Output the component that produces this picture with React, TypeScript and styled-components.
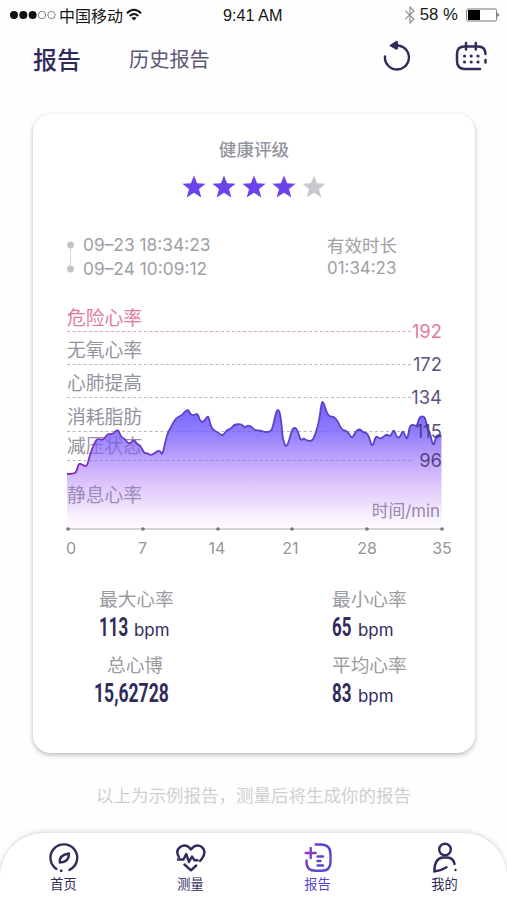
import React from "react";
import styled, { createGlobalStyle } from "styled-components";

const NAVY = "#312b5c";
const GREY = "#94949f";
const CJK = '"Noto Sans CJK SC", sans-serif';
const LATIN = 'Inter, "Noto Sans CJK SC", sans-serif';

const GlobalStyle = createGlobalStyle`
  * { box-sizing: border-box; }
  body { margin: 0; background: #fff; font-family: ${CJK}; overflow: hidden; }
  svg { display: block; flex: none; }
`;

const Screen = styled.main`
  width: 507px;
  height: 900px;
  display: flex;
  flex-direction: column;
  background: #fefefe;
  overflow: hidden;
`;

const StatusBar = styled.div`
  height: 30px;
  padding: 0 7px 0 10px;
  display: grid;
  grid-template-columns: 213px 1fr auto;
  align-items: center;
  color: #161616;
  font: 16.2px/30px "Liberation Sans", "Noto Sans CJK SC", sans-serif;
`;

const StatusGroup = styled.div<{ $gap: number }>`
  display: flex;
  align-items: center;
  gap: ${(p) => p.$gap}px;
  white-space: nowrap;
`;

const Carrier = styled.span`
  font: 16px/30px ${CJK};
`;

const Percent = styled.span`
  font-size: 16.8px;
  margin-right: 4px;
`;

const Header = styled.header`
  height: 84px;
  padding: 9px 18px 0 33px;
  display: flex;
  align-items: flex-start;
`;

const Tab = styled.span<{ $active?: boolean }>`
  width: ${(p) => (p.$active ? 96 : 253)}px;
  line-height: 40px;
  font-size: ${(p) => (p.$active ? 24 : 20.2)}px;
  font-weight: ${(p) => (p.$active ? 500 : 400)};
  color: ${(p) => (p.$active ? NAVY : "#5c5875")};
`;

const HeaderIcons = styled.div`
  display: flex;
  gap: 43px;
`;

const Card = styled.section`
  width: 442px;
  height: 639px;
  margin-left: 33px;
  flex: none;
  display: flex;
  flex-direction: column;
  border-radius: 18px;
  background: #fff;
  box-shadow: 0 2px 5px rgba(0, 0, 0, 0.27);
`;

const RatingTitle = styled.h2`
  margin: 20px 0 0;
  height: 30px;
  text-align: center;
  font-size: 17.6px;
  line-height: 30px;
  font-weight: 500;
  color: ${GREY};
`;

const Stars = styled.div`
  display: flex;
  justify-content: center;
  gap: 6px;
  height: 25px;
  margin-top: 11px;
`;

const Session = styled.div`
  display: flex;
  height: 48px;
  margin-top: 33px;
  padding-left: 33px;
  color: #a0a0a5;
  font: 17.35px/24px ${LATIN};
`;

const Times = styled.div`
  width: 244px;
  margin-left: 8px;
  display: flex;
  flex-direction: column;
`;

const Duration = styled.div`
  display: flex;
  flex-direction: column;
  font-size: 16.9px;
  line-height: 23px;
  padding-top: 1px;
`;

const DurationLabel = styled.span`
  font-size: 17.5px;
`;

const ChartArea = styled.div`
  margin: 19px 0 0 27px;
  width: 400px;
  height: 265px;
`;

const Stats = styled.div`
  display: grid;
  grid-template-columns: 233px 1fr;
  grid-auto-rows: 66px;
  padding-left: 61px;
  margin-top: 19px;
`;

const Stat = styled.div<{ $inset?: number }>`
  display: flex;
  flex-direction: column;
  padding-left: ${(p) => p.$inset ?? 5}px;
`;

const StatLabel = styled.span<{ $shift?: number }>`
  padding-left: ${(p) => p.$shift ?? 0}px;
  font-size: 18.7px;
  line-height: 28px;
  color: #9b9ba2;
`;

const StatValue = styled.div`
  display: flex;
  align-items: baseline;
  color: ${NAVY};
  height: 32px;
  line-height: 32px;
`;

const Figure = styled.strong<{ $width: number; $scale?: number }>`
  width: ${(p) => p.$width}px;
  white-space: nowrap;
  font: 700 26px/31px Roboto, sans-serif;
  transform: scaleX(${(p) => p.$scale ?? 0.65});
  transform-origin: left;
`;

const Unit = styled.span`
  font: 16.9px/28px ${LATIN};
`;

const Note = styled.p`
  margin: 27px 0 0;
  height: 30px;
  text-align: center;
  font-size: 17.5px;
  line-height: 30px;
  font-weight: 400;
  color: #cfcfd3;
`;

const NavBar = styled.nav`
  height: 67px;
  margin-top: auto;
  flex: none;
  display: grid;
  grid-template-columns: repeat(4, 127px);
  border-radius: 44px 44px 0 0;
  background: #fff;
  box-shadow: 0 -1px 5px rgba(0, 0, 0, 0.17);
`;

const NavItem = styled.div<{ $active?: boolean }>`
  display: flex;
  flex-direction: column;
  align-items: center;
  padding-top: 9px;
  font-size: 13.2px;
  line-height: 20px;
  color: ${(p) => (p.$active ? "#5646ce" : NAVY)};
`;

const curve: [number, number][] = [
  [67, 474], [75, 474], [77, 470], [79, 462.5], [85, 466.5], [87.5, 465], [90, 454], [95, 442], [97.3, 438.5], [103.3, 440.5],
  [107.7, 433.5], [112.3, 434.5], [115, 431.5], [118.3, 429.5], [121, 437], [124, 438], [128.3, 443.5], [131, 443], [134, 439.5],
  [137, 444], [140, 445], [144.3, 453.5], [147, 453], [150.7, 455.5], [155.7, 452.3], [160, 450], [162.3, 456], [165.7, 440],
  [168.3, 431.5], [170, 429], [175.7, 418], [181.7, 415.5], [184, 412.5], [188.3, 409], [190.3, 414.5], [194, 415.5],
  [197.7, 413], [200, 421.5], [204, 422], [208.3, 414.5], [210, 424], [213.3, 430.5], [218, 432], [221.7, 436], [225, 433],
  [226.7, 430], [231, 429], [234, 424.5], [242, 424], [244.5, 428], [248, 425], [252, 427], [255, 430.5], [261, 430.5],
  [264, 432], [270, 432], [272.7, 428], [276, 412], [278, 409.5], [280, 412.5], [282, 428], [282.5, 438], [286, 448],
  [289.3, 440.5], [291.7, 430], [295, 427], [298, 431.5], [300.7, 441], [304, 438], [306, 440.5], [312.7, 441.3], [316, 432],
  [319, 422], [321, 406], [322.7, 400.5], [325, 407], [328.3, 416.5], [334, 416.5], [337.7, 421], [341.7, 430], [347.3, 430.7],
  [352, 439], [355, 432.5], [359.3, 428.5], [363.3, 432.5], [366.7, 433], [369.3, 437.3], [372.3, 448], [376, 435],
  [379.3, 439], [383.3, 437.3], [386.7, 434], [390.7, 437], [393.7, 428.5], [396.7, 437.5], [400, 437.5], [402.7, 430],
  [405, 435.5], [407.5, 440], [409.5, 426], [412.7, 424.5], [417, 426.5], [419, 418], [422, 416], [425.3, 417.5],
  [427.3, 429], [430, 432], [433.3, 448], [436.5, 434], [441.5, 436.5],
];

// Rounds each corner by running a quadratic segment through the midpoints.
const linePath = curve.reduce((d, [x, y], i) => {
  if (i === 0) return `M${x} ${y}`;
  const next = curve[i + 1];
  return next ? `${d} Q${x} ${y} ${(x + next[0]) / 2} ${(y + next[1]) / 2}` : `${d} L${x} ${y}`;
}, "");

const zones = [
  { name: "危险心率", y: 317.5, line: 331.5, limit: "192", danger: true },
  { name: "无氧心率", y: 349.5, line: 364.5, limit: "172" },
  { name: "心肺提高", y: 382.5, line: 397.5, limit: "134" },
  { name: "消耗脂肪", y: 416.5, line: 431.5, limit: "115" },
  { name: "减压状态", y: 445.5, line: 460.5, limit: "96" },
  { name: "静息心率", y: 494.5 },
];

const ticks = [
  { x: 68, at: 71, label: "0" },
  { x: 143, at: 142.5, label: "7" },
  { x: 218, at: 217, label: "14" },
  { x: 292, at: 290.5, label: "21" },
  { x: 367, at: 367, label: "28" },
  { x: 442, at: 442, label: "35" },
];

const HeartRateChart = () => (
  <svg width="400" height="265" viewBox="60 300 400 265">
    <defs>
      <linearGradient id="area" gradientUnits="userSpaceOnUse" x1="0" y1="405" x2="0" y2="528">
        <stop offset="0" stopColor="#6654ff" stopOpacity=".9" />
        <stop offset=".22" stopColor="#7059fa" stopOpacity=".78" />
        <stop offset=".5" stopColor="#9765fa" stopOpacity=".53" />
        <stop offset=".8" stopColor="#b878f5" stopOpacity=".25" />
        <stop offset="1" stopColor="#dba6ff" stopOpacity=".04" />
      </linearGradient>
      <linearGradient id="stroke" gradientUnits="userSpaceOnUse" x1="67" y1="0" x2="442" y2="0">
        <stop offset="0" stopColor="#832bb9" />
        <stop offset=".3" stopColor="#6340cf" />
        <stop offset="1" stopColor="#5940c9" />
      </linearGradient>
    </defs>
    {zones.map((z) => (
      <g key={z.name}>
        <text x="67" y={z.y + 7} fontSize="18.8" fontFamily="Noto Sans CJK SC" fill={z.danger ? "#df7c99" : GREY}>{z.name}</text>
        {z.line && <path d={`M67 ${z.line}H411`} stroke={z.danger ? "#e6a0b3" : "#b8b8c0"} strokeDasharray="3 2.5" />}
      </g>
    ))}
    <path d={`${linePath} V528 H67 Z`} fill="url(#area)" />
    <path d={linePath} fill="none" stroke="url(#stroke)" strokeWidth="1.8" strokeLinejoin="round" />
    {zones.map((z) => z.limit && (
      <text key={z.limit} x="442" y={z.line! + 6.7} fontSize="18.4" textAnchor="end" fontFamily="Inter" fill={z.danger ? "#df7c99" : "#3d2f6b"} fillOpacity={z.danger ? 1 : 0.85}>{z.limit}</text>
    ))}
    <text x="440" y="517" fontSize="16.8" textAnchor="end" fontFamily="Inter, Noto Sans CJK SC" fill="#9588a9">时间/min</text>
    <path d="M67 529H442" stroke="#aaa7ad" />
    {ticks.map((t) => (
      <g key={t.label}>
        <circle cx={t.x} cy="529" r="1.8" fill="#77747c" />
        <text x={t.at} y="553.5" fontSize="16" textAnchor="middle" fontFamily="Inter" fill="#96969c">{t.label}</text>
      </g>
    ))}
  </svg>
);

const SignalDots = () => (
  <svg width="46" height="10" viewBox="0 0 46 10">
    {[4, 13.3, 22.6].map((x) => <circle key={x} cx={x} cy="5" r="4" fill="#111" />)}
    {[32, 41.5].map((x) => <circle key={x} cx={x} cy="5" r="3.7" fill="none" stroke="#777" strokeWidth=".9" />)}
  </svg>
);

const WifiIcon = () => (
  <svg width="16" height="14" viewBox="0 0 16 14" fill="none" stroke="#111" strokeWidth="2">
    <path d="M1 5.2Q8-1.6 15 5.2" />
    <path d="M3.7 8Q8 4 12.3 8" />
    <path d="M8 12.5 5.4 10Q8 7.8 10.6 10Z" fill="#111" stroke="none" />
  </svg>
);

const BluetoothIcon = () => (
  <svg width="12" height="18" viewBox="0 0 12 18" fill="none" stroke="#8d8d8d" strokeWidth="1.1">
    <path d="M1.2 4.8 10 13 6 17V1L10 5 1.2 13.2" />
  </svg>
);

const BatteryIcon = () => (
  <svg width="34" height="14" viewBox="0 0 34 14">
    <rect x=".6" y="1" width="30" height="12" rx="1.5" fill="#fff" stroke="#777" />
    <rect x="2" y="2" width="12" height="10" fill="#000" />
    <path d="M31.5 5Q34 7 31.5 9Z" fill="#222" />
  </svg>
);

const RefreshIcon = () => (
  <svg width="30" height="34" viewBox="0 0 30 34">
    <path d="M3 17.5A12 12 0 1 0 16 6.5" fill="none" stroke={NAVY} strokeWidth="2.4" strokeLinecap="round" />
    <path d="M7.8 6.6 14.2 2.4Q15.6 1.8 15.6 3.2V9.2Q15.6 10.6 14.2 10.2Z" fill={NAVY} stroke={NAVY} strokeLinejoin="round" />
  </svg>
);

const CalendarIcon = () => (
  <svg width="32" height="34" viewBox="0 0 32 34" fill="none" stroke={NAVY} strokeWidth="2.5" strokeLinecap="round">
    <path d="M25 30H10Q2 30 2 22V15Q2 7.5 9.5 7.5H23Q30.5 7.5 30.5 15M30.5 21V23.5M11 4V10.5M20.8 4V10.5" />
    {[9.5, 16.2, 23].flatMap((x) => [17, 23].map((y) => <circle key={`${x}-${y}`} cx={x} cy={y} r="1.6" fill={NAVY} stroke="none" />))}
  </svg>
);

const Star = ({ filled }: { filled: boolean }) => (
  <svg width="24" height="24" viewBox="0 0 24 24">
    <path d="M12 .4 15.1 8.3 23.6 8.8 17 14.1 19.3 22.5 12 17.8 4.7 22.5 7 14.1.4 8.8 8.9 8.3Z" fill={filled ? "#6c43eb" : "#c8c9cd"} />
  </svg>
);

const Timeline = () => (
  <svg width="9" height="48" viewBox="0 0 9 48">
    <path d="M4.5 12V36" stroke="#d6d6d8" />
    <circle cx="4.5" cy="12" r="3.4" fill="#c4c4c6" />
    <circle cx="4.5" cy="36" r="3.4" fill="#c4c4c6" />
  </svg>
);

const NavIcon = ({ children, color = NAVY }: { children: React.ReactNode; color?: string }) => (
  <svg width="32" height="32" viewBox="0 0 32 32" fill="none" stroke={color} strokeWidth="2.4" strokeLinecap="round" strokeLinejoin="round">
    {children}
  </svg>
);

const HomeIcon = () => (
  <NavIcon>
    <path d="M8.4 26.9A13.4 13.4 0 1 1 21.5 27.9M13 28.7L13.5 28.8" />
    <path d="M11.8 20.5Q11 13 21 11.5Q21 20.5 11.8 20.5Z" />
  </NavIcon>
);

const MeasureIcon = () => (
  <NavIcon>
    <path d="M4 15Q0 9 5.2 5Q11 1.3 16 7.4Q21 1.3 26.8 5Q32 9.5 27 16.5Q26 18 25 19M9.5 22.5 16 28.3 21.2 23.5" />
    <path d="M3 17.5H8.5L11.2 12 14 20 17 14.5 19.5 18.3H22.5" />
  </NavIcon>
);

const ReportIcon = () => (
  <NavIcon color="url(#report)">
    <defs>
      <linearGradient id="report" gradientUnits="userSpaceOnUse" x1="2" y1="8" x2="22" y2="18">
        <stop stopColor="#ad31c5" /><stop offset=".55" stopColor="#6542cb" /><stop offset="1" stopColor="#5548cf" />
      </linearGradient>
    </defs>
    <path d="M13.5 2.5H18.5Q28.5 2.5 28.5 12V20Q28.5 28.8 19.5 28.8H13.5Q4.5 28.8 4.5 20V18.5" />
    <path d="M8.7 6V16M3.7 11H13.7" />
    <path d="M15.5 14.5H21M15.5 19H18.5M15.5 23.5H21" />
  </NavIcon>
);

const ProfileIcon = () => (
  <NavIcon>
    <circle cx="16" cy="7.5" r="5.8" />
    <path d="M25.5 22Q24.5 15.8 18 15.5H14Q5.5 16 5.3 29.5Q11.5 29 17.5 25.2M26.5 28V28.1" />
  </NavIcon>
);

export default function App() {
  return (
    <Screen>
      <GlobalStyle />
      <StatusBar>
        <StatusGroup $gap={3}><SignalDots /><Carrier>中国移动</Carrier><WifiIcon /></StatusGroup>
        <span>9:41 AM</span>
        <StatusGroup $gap={4}><BluetoothIcon /><Percent>58 %</Percent><BatteryIcon /></StatusGroup>
      </StatusBar>
      <Header>
        <Tab $active>报告</Tab>
        <Tab>历史报告</Tab>
        <HeaderIcons><RefreshIcon /><CalendarIcon /></HeaderIcons>
      </Header>
      <Card>
        <RatingTitle>健康评级</RatingTitle>
        <Stars>{[1, 2, 3, 4, 5].map((n) => <Star key={n} filled={n <= 4} />)}</Stars>
        <Session>
          <Timeline />
          <Times><span>09–23 18:34:23</span><span>09–24 10:09:12</span></Times>
          <Duration><DurationLabel>有效时长</DurationLabel><span>01:34:23</span></Duration>
        </Session>
        <ChartArea><HeartRateChart /></ChartArea>
        <Stats>
          <Stat>
            <StatLabel>最大心率</StatLabel>
            <StatValue><Figure $width={35}>113</Figure><Unit>bpm</Unit></StatValue>
          </Stat>
          <Stat>
            <StatLabel>最小心率</StatLabel>
            <StatValue><Figure $width={26}>65</Figure><Unit>bpm</Unit></StatValue>
          </Stat>
          <Stat $inset={0}>
            <StatLabel $shift={13}>总心博</StatLabel>
            <StatValue><Figure $width={76} $scale={0.675}>15,62728</Figure></StatValue>
          </Stat>
          <Stat>
            <StatLabel>平均心率</StatLabel>
            <StatValue><Figure $width={26}>83</Figure><Unit>bpm</Unit></StatValue>
          </Stat>
        </Stats>
      </Card>
      <Note>以上为示例报告，测量后将生成你的报告</Note>
      <NavBar>
        <NavItem><HomeIcon />首页</NavItem>
        <NavItem><MeasureIcon />测量</NavItem>
        <NavItem $active><ReportIcon />报告</NavItem>
        <NavItem><ProfileIcon />我的</NavItem>
      </NavBar>
    </Screen>
  );
}
